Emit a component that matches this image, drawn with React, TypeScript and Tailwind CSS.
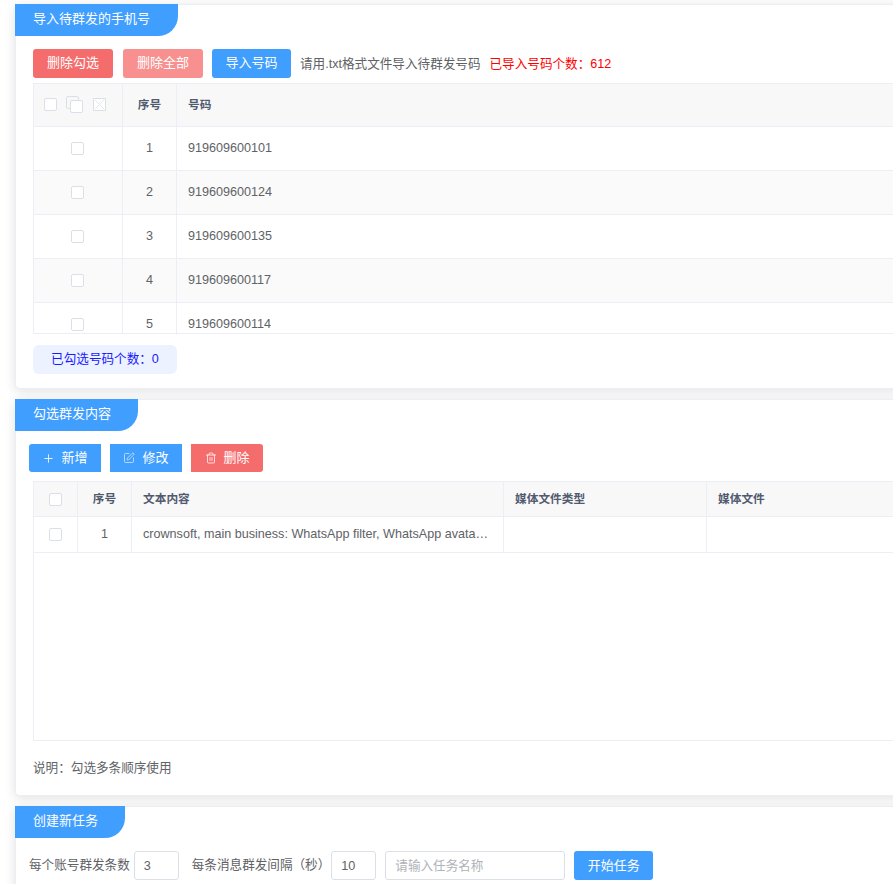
import React from 'react';
import { Plus, SquarePen, Trash2 } from 'lucide-react';

const font = 'font-["Liberation_Sans","Noto_Sans_CJK_SC",sans-serif]';

const phones = [
  { id: 1, phone: '919609600101' },
  { id: 2, phone: '919609600124' },
  { id: 3, phone: '919609600135' },
  { id: 4, phone: '919609600117' },
  { id: 5, phone: '919609600114' },
];

const Check = () => (
  <span className="block w-[13px] h-[13px] bg-white border border-[#dcdfe6] rounded-[2px]" />
);

const Card = ({ title, tabWidth, className, children }: { title: string; tabWidth: string; className: string; children: React.ReactNode }) => (
  <section className={`bg-white border border-[#ebeef5] rounded-[4px] shadow-[0_2px_12px_0_rgba(0,0,0,0.12)] ${className}`}>
    <div className={`h-8 ${tabWidth} bg-[#409eff] rounded-br-[20px] text-white text-[13px] leading-[30px] pl-[18px] -ml-px -mt-px`}>{title}</div>
    {children}
  </section>
);

const App = () => {
  return (
    <div className={`h-[884px] w-[893px] overflow-hidden bg-white pl-[15px] pt-1 ${font}`}>
      <Card title="导入待群发的手机号" tabWidth="w-[163px]" className="w-[1100px] h-[385px]">
        <div className="flex items-center h-[29px] mt-[13px] ml-[17px] text-[13px]">
          <button className="w-20 h-[29px] rounded-[3px] bg-[#f56c6c] text-white pb-px">删除勾选</button>
          <button className="w-20 h-[29px] rounded-[3px] bg-[#f89090] text-white ml-2.5 pb-px">删除全部</button>
          <button className="w-[79px] h-[29px] rounded-[3px] bg-[#409eff] text-white ml-[9px] pb-px">导入号码</button>
          <span className="ml-[9px] pt-[2px] text-[12.6px] text-[#606266]">请用.txt格式文件导入待群发号码</span>
          <span className="ml-[9px] pt-[2px] text-[12.6px] text-[#ff0000]">已导入号码个数：612</span>
        </div>
        <div className="ml-[17px] mt-[5px] h-[251px] border border-[#ebeef5] overflow-hidden text-[12.6px] text-[#606266]">
          <div className="flex h-[43px] bg-[#f8f8f9] border-b border-[#ebeef5] text-[11.7px] font-semibold text-[#515a6e] items-center">
            <div className="w-[89px] h-full border-r border-[#ebeef5] flex items-center pl-[10px] pb-[2px]">
              <Check />
              <span className="relative block w-[17px] h-[17px] ml-[9px]">
                <span className="absolute left-0 top-0 w-[13px] h-[13px] border border-[#dcdfe6] rounded-[2px]" />
                <span className="absolute left-1 top-1 w-[13px] h-[13px] bg-white border border-[#dcdfe6] rounded-[2px]" />
              </span>
              <span className="ml-[10px] w-[13px] h-[13px] border border-[#dcdfe6] flex items-center justify-center bg-white">
                <svg width="9" height="9" viewBox="0 0 9 9" stroke="#e4e7ed" strokeWidth="1"><path d="M0 0L9 9M9 0L0 9" /></svg>
              </span>
            </div>
            <div className="w-[54px] h-full border-r border-[#ebeef5] flex items-center justify-center pb-px">序号</div>
            <div className="pl-[11px] pb-px">号码</div>
          </div>
          {phones.map((row) => (
            <div key={row.id} className={`flex h-[44px] border-b border-[#ebeef5] items-center ${row.id % 2 === 0 ? 'bg-[#fafafa]' : 'bg-white'}`}>
              <div className="w-[89px] h-full border-r border-[#ebeef5] flex items-center justify-center pr-[2px]"><Check /></div>
              <div className="w-[54px] h-full border-r border-[#ebeef5] flex items-center justify-center pb-px">{row.id}</div>
              <div className="pl-[11px] pb-px">{row.phone}</div>
            </div>
          ))}
        </div>
        <div className="ml-[17px] mt-[11px] w-[144px] h-[29px] rounded-[6px] bg-[#ecf2ff] text-[#1a1aff] text-[12.6px] flex items-center justify-center">已勾选号码个数：0</div>
      </Card>

      <Card title="勾选群发内容" tabWidth="w-[123px]" className="w-[1100px] h-[397px] mt-[10px]">
        <div className="flex items-center h-7 mt-[13px] ml-[13px] gap-[9px] text-[13px] text-white">
          <button className="w-[72px] h-7 rounded-l-[3px] bg-[#409eff] flex items-center justify-center gap-[6px]"><Plus size={13} strokeWidth={1.5} />新增</button>
          <button className="w-[72px] h-7 bg-[#409eff] flex items-center justify-center gap-[7px]"><SquarePen size={12} strokeWidth={1.5} className="opacity-80" />修改</button>
          <button className="w-[72px] h-7 rounded-r-[3px] bg-[#f56c6c] flex items-center justify-center gap-[6px] pl-px"><Trash2 size={12} strokeWidth={1.5} />删除</button>
        </div>
        <div className="ml-[17px] mt-[9px] h-[260px] border border-[#ebeef5] text-[12.6px] text-[#606266]">
          <div className="flex h-[35px] bg-[#f8f8f9] border-b border-[#ebeef5] text-[11.7px] font-semibold text-[#515a6e] items-center">
            <div className="w-[44px] h-full border-r border-[#ebeef5] flex items-center justify-center"><Check /></div>
            <div className="w-[54px] h-full border-r border-[#ebeef5] flex items-center justify-center">序号</div>
            <div className="w-[372px] h-full border-r border-[#ebeef5] flex items-center pl-[11px]">文本内容</div>
            <div className="w-[203px] h-full border-r border-[#ebeef5] flex items-center pl-[11px]">媒体文件类型</div>
            <div className="pl-[11px]">媒体文件</div>
          </div>
          <div className="flex h-[36px] border-b border-[#ebeef5] items-center">
            <div className="w-[44px] h-full border-r border-[#ebeef5] flex items-center justify-center"><Check /></div>
            <div className="w-[54px] h-full border-r border-[#ebeef5] flex items-center justify-center">1</div>
            <div className="w-[372px] h-full border-r border-[#ebeef5] flex items-center px-[11px]">
              <span className="block whitespace-nowrap">crownsoft, main business: WhatsApp filter, WhatsApp avata…</span>
            </div>
            <div className="w-[203px] h-full border-r border-[#ebeef5]" />
          </div>
        </div>
        <div className="ml-[17px] mt-[18px] text-[12.6px] text-[#606266]">说明：勾选多条顺序使用</div>
      </Card>

      <Card title="创建新任务" tabWidth="w-[110px]" className="w-[1100px] h-[120px] mt-[10px]">
        <div className="flex items-center h-[29px] mt-[13px] ml-[13px] text-[12.6px] text-[#606266]">
          <span>每个账号群发条数</span>
          <input readOnly value="3" className="ml-1 w-[45px] h-[29px] border border-[#dcdfe6] rounded-[3px] pl-[9px] outline-none text-[12.6px]" />
          <span className="ml-[13px]">每条消息群发间隔（秒）</span>
          <input readOnly value="10" className="ml-[1px] w-[45px] h-[29px] border border-[#dcdfe6] rounded-[3px] pl-[9px] outline-none text-[12.6px]" />
          <input readOnly placeholder="请输入任务名称" className="ml-[9px] w-[180px] h-[29px] border border-[#dcdfe6] rounded-[3px] pl-[9px] outline-none text-[12.6px] placeholder:text-[#b0b3b8]" />
          <button className="ml-[9px] w-[79px] h-[29px] rounded-[3px] bg-[#409eff] text-white text-[13px]">开始任务</button>
        </div>
      </Card>
    </div>
  );
};

export default App;
